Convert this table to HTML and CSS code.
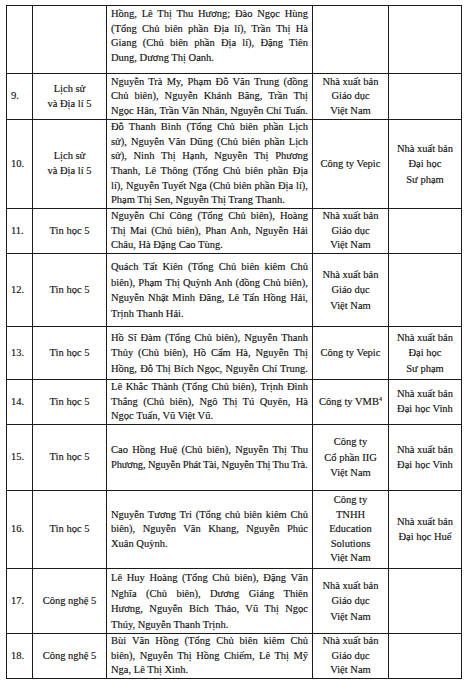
FILE: index.html
```html
<!DOCTYPE html>
<html lang="vi">
<head>
<meta charset="utf-8">
<title>Danh mục sách giáo khoa lớp 5</title>
<link rel="stylesheet" href="styles.css">
</head>
<body>
<table class="list">
  <colgroup>
    <col class="c-no"><col class="c-subj"><col class="c-auth"><col class="c-org"><col class="c-pub">
  </colgroup>
  <tbody>
    <tr class="r8">
      <td></td><td></td>
      <td class="auth top">
        <span class="ln">Hồng, Lê Thị Thu Hương; Đào Ngọc Hùng</span>
        <span class="ln">(Tổng Chủ biên phần Địa lí), Trần Thị Hà</span>
        <span class="ln">Giang (Chủ biên phần Địa lí), Đặng Tiên</span>
        <span class="ln end">Dung, Dương Thị Oanh.</span>
      </td>
      <td></td><td></td>
    </tr>
    <tr class="r9">
      <td class="no">9.</td>
      <td class="ctr"><span class="b">Lịch sử</span><span class="b">và Địa lí 5</span></td>
      <td class="auth">
        <span class="ln">Nguyễn Trà My, Phạm Đỗ Văn Trung (đồng</span>
        <span class="ln">Chủ biên), Nguyễn Khánh Băng, Trần Thị</span>
        <span class="ln">Ngọc Hân, Trần Văn Nhân, Nguyễn Chí Tuấn.</span>
      </td>
      <td class="ctr"><span class="b">Nhà xuất bản</span><span class="b">Giáo dục</span><span class="b">Việt Nam</span></td>
      <td></td>
    </tr>
    <tr class="r10">
      <td class="no">10.</td>
      <td class="ctr"><span class="b">Lịch sử</span><span class="b">và Địa lí 5</span></td>
      <td class="auth">
        <span class="ln">Đỗ Thanh Bình (Tổng Chủ biên phần Lịch</span>
        <span class="ln">sử), Nguyễn Văn Dũng (Chủ biên phần Lịch</span>
        <span class="ln">sử), Ninh Thị Hạnh, Nguyễn Thị Phương</span>
        <span class="ln">Thanh, Lê Thông (Tổng Chủ biên phần Địa</span>
        <span class="ln">lí), Nguyễn Tuyết Nga (Chủ biên phần Địa lí),</span>
        <span class="ln end">Phạm Thị Sen, Nguyễn Thị Trang Thanh.</span>
      </td>
      <td class="ctr">Công ty Vepic</td>
      <td class="ctr pub"><span class="b">Nhà xuất bản</span><span class="b">Đại học</span><span class="b">Sư phạm</span></td>
    </tr>
    <tr class="r11">
      <td class="no">11.</td>
      <td class="ctr">Tin học 5</td>
      <td class="auth">
        <span class="ln">Nguyễn Chí Công (Tổng Chủ biên), Hoàng</span>
        <span class="ln">Thị Mai (Chủ biên), Phan Anh, Nguyễn Hải</span>
        <span class="ln end">Châu, Hà Đặng Cao Tùng.</span>
      </td>
      <td class="ctr"><span class="b">Nhà xuất bản</span><span class="b">Giáo dục</span><span class="b">Việt Nam</span></td>
      <td></td>
    </tr>
    <tr class="r12">
      <td class="no">12.</td>
      <td class="ctr">Tin học 5</td>
      <td class="auth loose">
        <span class="ln">Quách Tất Kiên (Tổng Chủ biên kiêm Chủ</span>
        <span class="ln">biên), Phạm Thị Quỳnh Anh (đồng Chủ biên),</span>
        <span class="ln">Nguyễn Nhật Minh Đăng, Lê Tấn Hồng Hải,</span>
        <span class="ln end">Trịnh Thanh Hải.</span>
      </td>
      <td class="ctr pub"><span class="b">Nhà xuất bản</span><span class="b">Giáo dục</span><span class="b">Việt Nam</span></td>
      <td></td>
    </tr>
    <tr class="r13">
      <td class="no">13.</td>
      <td class="ctr">Tin học 5</td>
      <td class="auth loose">
        <span class="ln">Hồ Sĩ Đàm (Tổng Chủ biên), Nguyễn Thanh</span>
        <span class="ln">Thủy (Chủ biên), Hồ Cẩm Hà, Nguyễn Thị</span>
        <span class="ln">Hồng, Đỗ Thị Bích Ngọc, Nguyễn Chí Trung.</span>
      </td>
      <td class="ctr">Công ty Vepic</td>
      <td class="ctr pub"><span class="b">Nhà xuất bản</span><span class="b">Đại học</span><span class="b">Sư phạm</span></td>
    </tr>
    <tr class="r14">
      <td class="no">14.</td>
      <td class="ctr">Tin học 5</td>
      <td class="auth">
        <span class="ln">Lê Khắc Thành (Tổng Chủ biên), Trịnh Đình</span>
        <span class="ln">Thắng (Chủ biên), Ngô Thị Tú Quyên, Hà</span>
        <span class="ln end">Ngọc Tuấn, Vũ Việt Vũ.</span>
      </td>
      <td class="ctr">Công ty VMB<sup class="fn">4</sup></td>
      <td class="ctr"><span class="b">Nhà xuất bản</span><span class="b">Đại học Vinh</span></td>
    </tr>
    <tr class="r15">
      <td class="no">15.</td>
      <td class="ctr">Tin học 5</td>
      <td class="auth">
        <span class="ln">Cao Hồng Huệ (Chủ biên), Nguyễn Thị Thu</span>
        <span class="ln end tight">Phương, Nguyễn Phát Tài, Nguyễn Thị Thu Trà.</span>
      </td>
      <td class="ctr pub"><span class="b">Công ty</span><span class="b">Cổ phần IIG</span><span class="b">Việt Nam</span></td>
      <td class="ctr"><span class="b">Nhà xuất bản</span><span class="b">Đại học Vinh</span></td>
    </tr>
    <tr class="r16">
      <td class="no">16.</td>
      <td class="ctr">Tin học 5</td>
      <td class="auth">
        <span class="ln">Nguyễn Tương Tri (Tổng chủ biên kiêm Chủ</span>
        <span class="ln">biên), Nguyễn Văn Khang, Nguyễn Phúc</span>
        <span class="ln end">Xuân Quỳnh.</span>
      </td>
      <td class="ctr"><span class="b">Công ty</span><span class="b">TNHH</span><span class="b">Education</span><span class="b">Solutions</span><span class="b">Việt Nam</span></td>
      <td class="ctr"><span class="b">Nhà xuất bản</span><span class="b">Đại học Huế</span></td>
    </tr>
    <tr class="r17">
      <td class="no">17.</td>
      <td class="ctr">Công nghệ 5</td>
      <td class="auth loose">
        <span class="ln">Lê Huy Hoàng (Tổng Chủ biên), Đặng Văn</span>
        <span class="ln">Nghĩa (Chủ biên), Dương Giáng Thiên</span>
        <span class="ln">Hương, Nguyễn Bích Thảo, Vũ Thị Ngọc</span>
        <span class="ln end">Thúy, Nguyễn Thanh Trịnh.</span>
      </td>
      <td class="ctr pub"><span class="b">Nhà xuất bản</span><span class="b">Giáo dục</span><span class="b">Việt Nam</span></td>
      <td></td>
    </tr>
    <tr class="r18">
      <td class="no">18.</td>
      <td class="ctr">Công nghệ 5</td>
      <td class="auth">
        <span class="ln">Bùi Văn Hồng (Tổng Chủ biên kiêm Chủ</span>
        <span class="ln">biên), Nguyễn Thị Hồng Chiếm, Lê Thị Mỹ</span>
        <span class="ln end">Nga, Lê Thị Xinh.</span>
      </td>
      <td class="ctr"><span class="b">Nhà xuất bản</span><span class="b">Giáo dục</span><span class="b">Việt Nam</span></td>
      <td></td>
    </tr>
  </tbody>
</table>
</body>
</html>
```
FILE: styles.css
```css
html, body {
  margin: 0;
  padding: 0;
  background: #ffffff;
}
body {
  padding: 5px 0 0 6px;
  font-family: "Liberation Serif", "Times New Roman", serif;
  font-size: 10.5px;
  line-height: 14.6px;
  color: #121212;
  -webkit-text-stroke: 0.15px #121212;
}
.list {
  border-collapse: collapse;
  table-layout: fixed;
  width: 455px;
}
.c-no { width: 26px; }
.c-subj { width: 74px; }
.c-auth { width: 206px; }
.c-org { width: 76px; }
.c-pub { width: 73px; }
.list td {
  border: 1px solid #1a1a1a;
  padding: 0 4px;
  vertical-align: middle;
}
.list td.top { vertical-align: top; padding-top: 1px; }
.no { text-align: left; }
.ctr { text-align: center; }
.pub { line-height: 15.5px; }
.b { display: block; }
.auth.loose { line-height: 15.5px; }
.auth .ln {
  display: block;
  white-space: nowrap;
  text-align: justify;
  text-align-last: justify;
}
.auth .ln.end {
  text-align: left;
  text-align-last: left;
}
.auth .ln.tight { letter-spacing: -0.15px; }
.fn { font-size: 6px; line-height: 0; vertical-align: 4px; }
.r8 td { height: 66px; }
.r9 td { height: 45px; }
.r10 td { height: 88px; }
.r11 td { height: 44px; }
.r12 td { height: 72px; }
.r13 td { height: 52px; }
.r14 td { height: 44px; }
.r15 td { height: 65px; }
.r16 td { height: 77px; }
.r17 td { height: 64px; }
.r18 td { height: 44px; }
```
